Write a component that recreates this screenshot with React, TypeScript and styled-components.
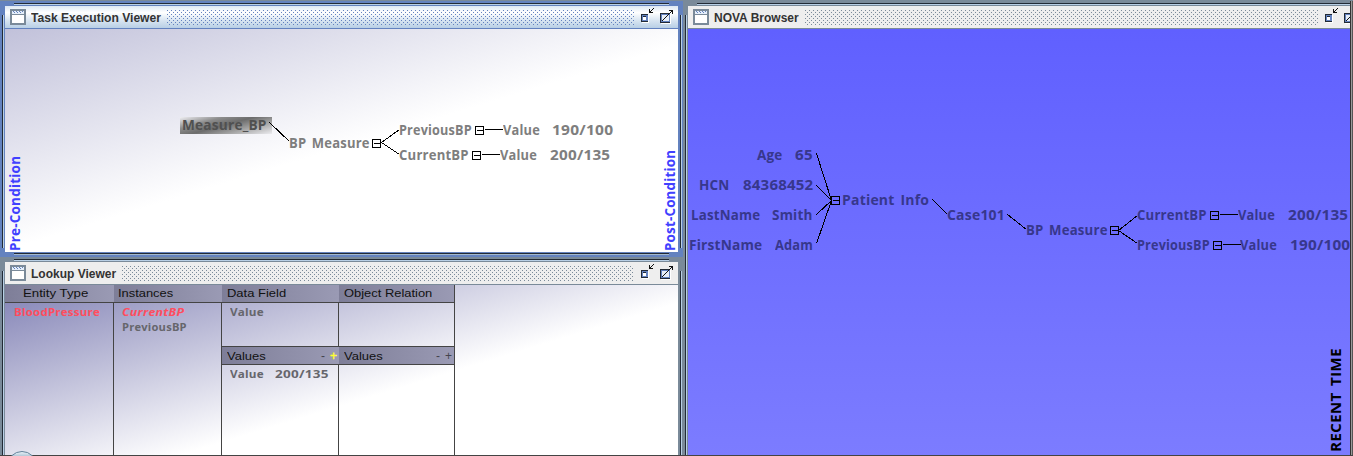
import React, { useLayoutEffect, useRef, useState } from 'react';
import styled, { createGlobalStyle, css } from 'styled-components';

const GlobalStyle = createGlobalStyle`
  * { box-sizing: border-box; }
  html, body { margin: 0; padding: 0; overflow: hidden; }
  body { font-family: "Liberation Sans", Arial, sans-serif; background: #7a8a99; }
`;

const hand = '"Comic Sans MS", "Open Sans", "Noto Sans", sans-serif';

/* ---------- text stretched to a known width ---------- */

const FitOuter = styled.span<{ $w: number }>`
  display: inline-block;
  width: ${p => p.$w}px;
  white-space: pre;
`;
const FitInner = styled.span`
  display: inline-block;
  transform-origin: 0 50%;
`;

function Fit({ w, children }: { w: number; children: string }) {
  const ref = useRef<HTMLSpanElement>(null);
  const [scale, setScale] = useState(1);
  useLayoutEffect(() => {
    if (ref.current) setScale(w / ref.current.offsetWidth);
  }, [w, children]);
  return (
    <FitOuter $w={w}>
      <FitInner ref={ref} style={{ transform: `scaleX(${scale})` }}>{children}</FitInner>
    </FitOuter>
  );
}

/* ---------- desktop and internal frames ---------- */

const Desktop = styled.main`
  display: flex;
  position: relative;
  width: 1353px;
  height: 456px;
  padding-top: 1px;
  overflow: hidden;
  background: #7a8a99;
`;
const LeftColumn = styled.div`
  display: flex;
  flex-direction: column;
  flex: 0 0 683px;
`;
const RightColumn = styled.div`
  display: flex;
  flex: 0 0 667px;
  overflow: hidden;
`;
const ScreenEdge = styled.div`
  flex: 0 0 3px;
  background: #9a9a9a;
  border-left: 1px solid #333;
  border-right: 1px solid #555;
`;
const BottomEdge = styled.div`
  position: absolute;
  left: 0;
  right: 0;
  bottom: 0;
  height: 1px;
  background: #444;
`;
const StartOrb = styled.div`
  position: absolute;
  left: 7px;
  top: 451px;
  width: 30px;
  height: 30px;
  border-radius: 50%;
  border: 1px solid #64839b;
  background: linear-gradient(#e8f2f8, #a5bdcf 5px);
`;

const Frame = styled.section<{ $active?: boolean; $w: number; $h: number }>`
  position: relative;
  display: flex;
  flex-direction: column;
  flex: none;
  width: ${p => p.$w}px;
  height: ${p => p.$h}px;
  padding: 5px;
  background: ${p => (p.$active ? '#6382bf' : '#7a8a99')};
  &::before, &::after {
    content: '';
    position: absolute;
    pointer-events: none;
  }
  &::before {
    left: 14px; right: 14px; top: 2px; bottom: 2px;
    border-top: 1px solid #222a35;
    border-bottom: 1px solid ${p => (p.$active ? '#a3b8cc' : '#b8cfe5')};
    box-shadow: inset 0 1px 0 #b8cfe5, inset 0 -1px 0 #222a35;
    clip-path: polygon(0 0, 100% 0, 100% 2px, 0 2px, 0 calc(100% - 2px), 100% calc(100% - 2px), 100% 100%, 0 100%);
  }
  &::after {
    top: 14px; bottom: 9px; left: 2px; right: 1px;
    border-left: 1px solid #222a35;
    border-right: 1px solid #b8cfe5;
    box-shadow: inset 1px 0 0 #b8cfe5, inset -1px 0 0 #222a35;
    clip-path: polygon(0 0, 2px 0, 2px 100%, calc(100% - 2px) 100%, calc(100% - 2px) 0, 100% 0, 100% 100%, 0 100%);
  }
`;

const TitleBar = styled.header<{ $active?: boolean }>`
  display: flex;
  align-items: center;
  flex: none;
  height: 23px;
  padding: 0 4px 0 5px;
  border-bottom: 1px solid ${p => (p.$active ? '#6382bf' : '#7a8a99')};
  background: ${p => (p.$active ? 'linear-gradient(#dde8f3, #ffffff 30%, #dde8f3 60%, #b8cfe5)' : '#eeeeee')};
`;
const Title = styled.h1<{ $w: number }>`
  flex: 0 0 ${p => p.$w}px;
  margin: 0 5px;
  padding-top: 1px;
  font-size: 12px;
  line-height: 20px;
  font-weight: 700;
  color: #333;
  white-space: nowrap;
`;
const Bumps = styled.div<{ $active?: boolean }>`
  flex: 1;
  height: 16px;
  margin-right: 7px;
  --dot: radial-gradient(circle at 0.5px 0.5px, ${p => (p.$active ? '#6382bf' : '#7a8a99')} 0.6px, transparent 0.7px);
  background-image: var(--dot), var(--dot);
  background-size: 4px 4px;
  background-position: 1px 1px, 3px 3px;
`;
const TitleIcons = styled.div`
  display: flex;
  gap: 4px;
  height: 22px;
  align-items: flex-start;
  padding-top: 2px;
`;

const WindowIcon = () => (
  <svg width="16" height="16" viewBox="0 0 16 16" shapeRendering="crispEdges">
    <rect x="0" y="0" width="16" height="16" rx="1" fill="#7a8a99" />
    <rect x="2" y="2" width="12" height="3" fill="#e4eefa" />
    <path d="M3 2h1v1H3zM6 2h1v1H6zM9 2h1v1H9zM12 2h1v1h-1zM4 3h1v1H4zM7 3h1v1H7zM10 3h1v1h-1z" fill="#6382bf" />
    <rect x="2" y="6" width="12" height="8" fill="#fff" />
  </svg>
);
const MinIcon = () => (
  <svg width="15" height="15" viewBox="0 0 15 15" shapeRendering="crispEdges">
    <rect x="1" y="7" width="7" height="8" fill="#fff" />
    <rect x="0" y="6" width="7" height="8" fill="#222a35" />
    <rect x="1" y="7" width="6" height="6" fill="#6382bf" />
    <rect x="2" y="8" width="3" height="4" fill="#222a35" />
    <rect x="2" y="9" width="3" height="3" fill="#fff" />
    <path d="M8 1h1v4H8zM9 4h3v1H9zM9 3h1v1H9zM10 2h1v1h-1zM11 1h1v1h-1zM12 0h1v1h-1z" fill="#111" />
  </svg>
);
const MaxIcon = () => (
  <svg width="14" height="16" viewBox="0 0 14 16" shapeRendering="crispEdges">
    <rect x="1" y="6" width="10" height="10" fill="#fff" />
    <rect x="0" y="5" width="10" height="10" fill="#222a35" />
    <rect x="1" y="6" width="9" height="8" fill="#6382bf" />
    <rect x="2" y="7" width="7" height="6" fill="#e6eef8" />
    <path d="M9 2h4v4h-1V3H9zM11 3h1v1h-1zM10 4h1v1h-1zM9 5h1v1H9zM8 6h1v1H8zM7 7h1v1H7zM6 8h1v1H6zM5 9h1v1H5zM4 10h1v1H4zM3 11h1v1H3zM2 12h1v1H2z" fill="#111" />
  </svg>
);

function InternalFrame(props: { title: string; titleWidth: number; active?: boolean; w: number; h: number; children: React.ReactNode }) {
  const { title, titleWidth, active, w, h, children } = props;
  return (
    <Frame $active={active} $w={w} $h={h}>
      <TitleBar $active={active}>
        <WindowIcon />
        <Title $w={titleWidth}><Fit w={titleWidth}>{title}</Fit></Title>
        <Bumps $active={active} />
        <TitleIcons><MinIcon /><MaxIcon /></TitleIcons>
      </TitleBar>
      {children}
    </Frame>
  );
}

/* ---------- graph canvas ---------- */

const Canvas = styled.div<{ $fill: string; $ink: string }>`
  position: relative;
  flex: 1;
  overflow: hidden;
  background: ${p => p.$fill};
  color: ${p => p.$ink};
  font: 700 13.5px/16px ${hand};
  letter-spacing: 0.2px;
  word-spacing: 2px;
`;
const Edges = styled.svg`
  position: absolute;
  left: 0;
  top: 0;
  width: 100%;
  height: 100%;
`;
const NodeLabel = styled.div<{ $x: number; $base: number }>`
  position: absolute;
  left: ${p => p.$x}px;
  top: ${p => p.$base - 13}px;
  height: 16px;
`;
const SelectedPlate = styled.div`
  position: absolute;
  left: 175px;
  top: 88px;
  width: 92px;
  height: 17px;
  padding-left: 2px;
  line-height: 16px;
  color: #505050;
  background: linear-gradient(165deg, #f0f0f4 0%, #8c8c8c 28%, #6c6c6c 48%, #a2a2a2 70%, #ececf0 100%);
`;
const SideText = styled.div<{ $x: number; $bottom: number; $ink: string }>`
  position: absolute;
  left: ${p => p.$x}px;
  top: ${p => p.$bottom}px;
  height: 14px;
  line-height: 14px;
  color: ${p => p.$ink};
  transform-origin: 0 0;
  transform: rotate(-90deg);
`;

type Label = [text: string, x: number, base: number, w: number];
type Line = [x1: number, y1: number, x2: number, y2: number];
type Box = [x: number, y: number];

function Graph({ labels, lines, boxes }: { labels: Label[]; lines: Line[]; boxes: Box[] }) {
  return (
    <>
      <Edges shapeRendering="crispEdges">
        {lines.map(([x1, y1, x2, y2], i) => (
          <line key={i} x1={x1 + 0.5} y1={y1 + 0.5} x2={x2 + 0.5} y2={y2 + 0.5} stroke="#000" />
        ))}
        {boxes.map(([x, y], i) => (
          <path key={i} d={`M${x + 0.5} ${y + 0.5}h8v8h-8zM${x + 2} ${y + 4.5}h6`} fill="none" stroke="#000" />
        ))}
      </Edges>
      {labels.map(([text, x, base, w], i) => (
        <NodeLabel key={i} $x={x} $base={base}><Fit w={w}>{text}</Fit></NodeLabel>
      ))}
    </>
  );
}

const taskLabels: Label[] = [
  ['BP Measure', 284, 119, 81],
  ['PreviousBP', 394, 106, 73],
  ['Value', 498, 106, 37],
  ['190/100', 547, 106, 61],
  ['CurrentBP', 394, 131, 70],
  ['Value', 495, 131, 37],
  ['200/135', 545, 131, 60],
];
const taskLines: Line[] = [
  [264, 93, 284, 112],
  [376, 113, 394, 100],
  [376, 113, 394, 125],
  [479, 100, 497, 100],
  [476, 125, 494, 125],
];
const taskBoxes: Box[] = [[367, 110], [470, 97], [467, 122]];

const novaLabels: Label[] = [
  ['Age', 69, 131, 26],
  ['65', 107, 131, 18],
  ['HCN', 11, 161, 31],
  ['84368452', 55, 161, 70],
  ['LastName', 3, 191, 69],
  ['Smith', 84, 191, 41],
  ['FirstName', 1, 221, 73],
  ['Adam', 87, 221, 38],
  ['Patient Info', 154, 176, 87],
  ['Case101', 259, 191, 58],
  ['BP Measure', 338, 206, 82],
  ['CurrentBP', 449, 191, 70],
  ['Value', 550, 191, 37],
  ['200/135', 600, 191, 60],
  ['PreviousBP', 449, 221, 73],
  ['Value', 552, 221, 37],
  ['190/100', 602, 221, 60],
];
const novaLines: Line[] = [
  [128, 124, 143, 171],
  [128, 156, 143, 171],
  [128, 185, 143, 171],
  [128, 214, 143, 171],
  [244, 170, 259, 185],
  [319, 185, 338, 200],
  [430, 201, 449, 186],
  [430, 201, 449, 214],
  [531, 185, 549, 185],
  [534, 215, 552, 215],
];
const novaBoxes: Box[] = [[143, 167], [422, 197], [522, 182], [525, 212]];

/* ---------- lookup table ---------- */

const LookupBody = styled.div`
  display: flex;
  flex: 1;
  background: linear-gradient(163deg, #8080b4 0, #fff 214px);
`;
const Column = styled.div<{ $w: number; $last?: boolean }>`
  display: flex;
  flex-direction: column;
  flex: 0 0 ${p => p.$w}px;
  ${p => p.$last && css`border-right: 1px solid #444;`}
`;
const ColumnHead = styled.div<{ $pad: number; $drop?: number }>`
  display: flex;
  flex: none;
  height: 18px;
  align-items: center;
  padding: ${p => p.$drop || 0}px 2px 0 ${p => p.$pad}px;
  border-bottom: 1px solid #444;
  background: linear-gradient(90deg, #7e7e98, #9a9ab4);
  color: #111;
  font-size: 11px;
  line-height: 15px;
`;
const Cell = styled.div<{ $h?: number; $pad: number; $last?: boolean }>`
  flex: ${p => (p.$h ? `0 0 ${p.$h}px` : '1')};
  display: flex;
  flex-direction: column;
  padding: 0 0 0 ${p => p.$pad}px;
  border-right: ${p => (p.$last ? '0' : '1px')} solid #444;
  border-bottom: ${p => (p.$h ? '1px' : '0')} solid #444;
  font: 700 11px/15px ${hand};
  letter-spacing: 0.2px;
  color: #66666c;
`;
const Entry = styled.div<{ $hot?: boolean; $slant?: boolean }>`
  display: flex;
  gap: 11px;
  height: 15px;
  padding-top: 1px;
  color: ${p => (p.$hot ? '#ff4d5e' : 'inherit')};
  font-style: ${p => (p.$slant ? 'italic' : 'normal')};
`;
const Signs = styled.span`
  display: flex;
  gap: 5px;
  margin-left: auto;
  font-size: 12px;
`;
const Sign = styled.span<{ $on?: boolean }>`
  color: ${p => (p.$on ? '#ffff33' : '#44444e')};
  -webkit-text-stroke: ${p => (p.$on ? '0.4px #ffff33' : '0')};
`;

function ValuesHead({ on }: { on?: boolean }) {
  return (
    <ColumnHead $pad={5} $drop={2}>
      <Fit w={39}>Values</Fit>
      <Signs><Sign>-</Sign><Sign $on={on}>+</Sign></Signs>
    </ColumnHead>
  );
}

export default function App() {
  return (
    <>
      <GlobalStyle />
      <Desktop>
        <LeftColumn>
          <InternalFrame title="Task Execution Viewer" titleWidth={130} active w={683} h={256}>
            <Canvas $fill="linear-gradient(163deg, #c1c1da 0, #fff 212px)" $ink="#7e7e7e">
              <SelectedPlate><Fit w={85}>Measure_BP</Fit></SelectedPlate>
              <Graph labels={taskLabels} lines={taskLines} boxes={taskBoxes} />
              <SideText $x={3} $bottom={222} $ink="#4040ff"><Fit w={95}>Pre-Condition</Fit></SideText>
              <SideText $x={658} $bottom={222} $ink="#4040ff"><Fit w={101}>Post-Condition</Fit></SideText>
            </Canvas>
          </InternalFrame>
          <InternalFrame title="Lookup Viewer" titleWidth={85} w={683} h={222}>
            <LookupBody>
              <Column $w={109}>
                <ColumnHead $pad={18}><Fit w={65}>Entity Type</Fit></ColumnHead>
                <Cell $pad={9}><Entry $hot><Fit w={86}>BloodPressure</Fit></Entry></Cell>
              </Column>
              <Column $w={108}>
                <ColumnHead $pad={4}><Fit w={55}>Instances</Fit></ColumnHead>
                <Cell $pad={8}>
                  <Entry $hot $slant><Fit w={62}>CurrentBP</Fit></Entry>
                  <Entry><Fit w={65}>PreviousBP</Fit></Entry>
                </Cell>
              </Column>
              <Column $w={117}>
                <ColumnHead $pad={5}><Fit w={59}>Data Field</Fit></ColumnHead>
                <Cell $pad={8} $h={44}><Entry><Fit w={34}>Value</Fit></Entry></Cell>
                <ValuesHead on />
                <Cell $pad={8}><Entry><Fit w={34}>Value</Fit><Fit w={54}>200/135</Fit></Entry></Cell>
              </Column>
              <Column $w={116} $last>
                <ColumnHead $pad={5}><Fit w={88}>Object Relation</Fit></ColumnHead>
                <Cell $pad={8} $h={44} $last />
                <ValuesHead />
                <Cell $pad={8} $last />
              </Column>
            </LookupBody>
          </InternalFrame>
        </LeftColumn>
        <RightColumn>
          <InternalFrame title="NOVA Browser" titleWidth={85} w={684} h={474}>
            <Canvas $fill="linear-gradient(#6060ff, #7c7cff 427px)" $ink="#37378c">
              <Graph labels={novaLabels} lines={novaLines} boxes={novaBoxes} />
              <SideText $x={641} $bottom={423} $ink="#000"><Fit w={104}>RECENT TIME</Fit></SideText>
            </Canvas>
          </InternalFrame>
        </RightColumn>
        <ScreenEdge />
        <BottomEdge />
        <StartOrb />
      </Desktop>
    </>
  );
}
